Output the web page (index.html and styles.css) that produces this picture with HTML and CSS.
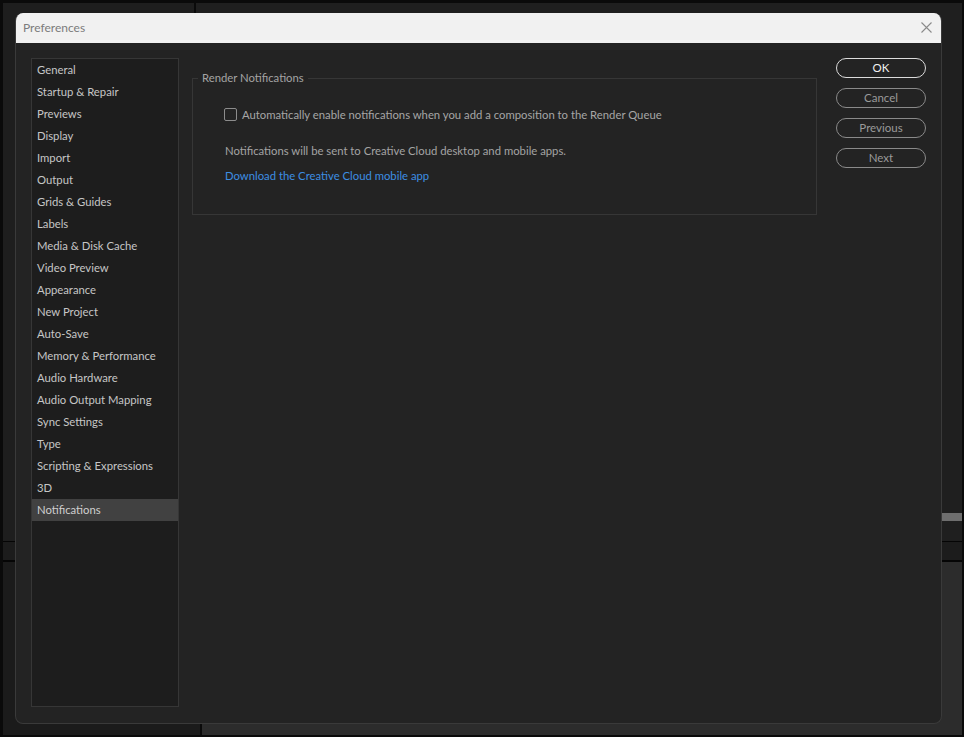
FILE: index.html
```html
<!DOCTYPE html>
<html>
<head>
<meta charset="utf-8">
<title>Preferences</title>
<link rel="stylesheet" href="styles.css">
</head>
<body>
<div class="app">
  <div class="app-top">
    <div class="pane pane-left"></div>
    <div class="pane pane-right">
      <div class="thumb-track"><div class="thumb"></div></div>
    </div>
  </div>
  <div class="app-mid"></div>
  <div class="app-bottom">
    <div class="pane bottom-left"></div>
    <div class="pane bottom-right"></div>
  </div>
</div>

<div class="dialog">
  <div class="titlebar">
    <span class="title">Preferences</span>
    <svg class="close" width="11" height="11" viewBox="0 0 11 11"><path d="M0.5 0.5 L10.5 10.5 M10.5 0.5 L0.5 10.5" stroke="#8a8a8a" stroke-width="1.1" fill="none"/></svg>
  </div>
  <div class="dialog-body">
    <ul class="sidebar">
      <li>General</li>
      <li>Startup &amp; Repair</li>
      <li>Previews</li>
      <li>Display</li>
      <li>Import</li>
      <li>Output</li>
      <li>Grids &amp; Guides</li>
      <li>Labels</li>
      <li>Media &amp; Disk Cache</li>
      <li>Video Preview</li>
      <li>Appearance</li>
      <li>New Project</li>
      <li>Auto-Save</li>
      <li>Memory &amp; Performance</li>
      <li>Audio Hardware</li>
      <li>Audio Output Mapping</li>
      <li>Sync Settings</li>
      <li>Type</li>
      <li>Scripting &amp; Expressions</li>
      <li>3D</li>
      <li class="selected">Notifications</li>
    </ul>
    <div class="content">
      <fieldset class="group">
        <legend>Render Notifications</legend>
        <div class="group-body">
          <label class="check-row"><span class="checkbox"></span><span>Automatically enable notifications when you add a composition to the Render Queue</span></label>
          <p class="note">Notifications will be sent to Creative Cloud desktop and mobile apps.</p>
          <a class="link">Download the Creative Cloud mobile app</a>
        </div>
      </fieldset>
    </div>
    <div class="buttons">
      <button class="btn btn-primary">OK</button>
      <button class="btn">Cancel</button>
      <button class="btn">Previous</button>
      <button class="btn">Next</button>
    </div>
  </div>
</div>
</body>
</html>
```

FILE: styles.css
```css
* { box-sizing: border-box; }
html, body { margin: 0; padding: 0; }
body {
  width: 964px;
  height: 737px;
  overflow: hidden;
  background: #0a0a0a;
  font-family: "Lato", "Noto Sans", sans-serif;
  font-size: 11.3px;
  position: relative;
}

/* background application */
.app {
  width: 964px;
  height: 737px;
  padding: 3px 2px 2px 3px;
  display: flex;
  flex-direction: column;
}
.app-top {
  height: 538px;
  display: flex;
  gap: 2px;
}
.pane-left { width: 191px; background: #1e1e1e; }
.pane-right { flex: 1; background: #1f1f1f; display: flex; justify-content: flex-end; }
.thumb-track { width: 21px; padding-top: 510px; }
.thumb { height: 8px; background: #6e6e6e; }
.app-mid {
  height: 21px;
  border-top: 1px solid #050505;
  border-bottom: 2px solid #050505;
  background: #1c1c1c;
}
.app-bottom {
  flex: 1;
  display: flex;
  gap: 2px;
}
.bottom-left { width: 197px; background: #1b1b1b; }
.bottom-right { flex: 1; background: #2c2c2c; }

/* dialog */
.dialog {
  position: absolute;
  left: 15px;
  top: 13px;
  width: 927px;
  height: 711px;
  background: #232323;
  border: 1px solid #3a3a3a;
  border-top: none;
  border-radius: 8px;
  display: flex;
  flex-direction: column;
  overflow: hidden;
}
.titlebar {
  height: 30px;
  background: #f1f1f1;
  display: flex;
  align-items: center;
  justify-content: space-between;
  padding: 0 9px 0 7px;
  flex-shrink: 0;
}
.title {
  color: #7c7c7c;
  font-size: 12px;
  margin-top: -2px;
}
.close { display: block; margin-top: -2px; }

.dialog-body {
  flex: 1;
  display: flex;
  padding: 15px 15px 15px 15px;
  min-height: 0;
}

.sidebar {
  list-style: none;
  margin: 0;
  padding: 0;
  width: 148px;
  height: 649px;
  background: #1d1d1d;
  border: 1px solid #363636;
  flex-shrink: 0;
}
.sidebar li {
  height: 22px;
  line-height: 22px;
  padding-left: 5px;
  color: #c6c6c6;
  font-size: 11.3px;
  white-space: nowrap;
}
.sidebar li.selected {
  background: #414141;
  color: #cfcfcf;
}

.content {
  width: 625px;
  margin-left: 13px;
  padding-top: 13px;
  flex-shrink: 0;
}
.group {
  margin: 0;
  padding: 0;
  border: 1px solid #363636;
  min-width: 0;
}
.group legend {
  margin-left: 5px;
  padding: 0 4px;
  line-height: 14px;
  color: #a3a3a3;
  font-size: 11.3px;
}
.group-body {
  padding: 22px 0 30px 31px;
}
.check-row {
  display: flex;
  align-items: center;
  gap: 5px;
  height: 14px;
  color: #a6a6a6;
  font-size: 11.3px;
  white-space: nowrap;
}
.checkbox {
  width: 13px;
  height: 13px;
  border: 1.5px solid #8c8c8c;
  border-radius: 2px;
  flex-shrink: 0;
}
.note {
  margin: 22px 0 0 1px;
  line-height: 16px;
  color: #a3a3a3;
  font-size: 11.3px;
}
.link {
  display: block;
  margin: 9px 0 0 1px;
  line-height: 16px;
  color: #3d8ee2;
  font-size: 11.3px;
}

.buttons {
  margin-left: 19px;
  width: 90px;
  display: flex;
  flex-direction: column;
  gap: 10px;
}
.btn {
  height: 20px;
  width: 90px;
  border-radius: 10px;
  border: 1.5px solid #8a8a8a;
  background: transparent;
  color: #9a9a9a;
  font-family: "Lato", "Noto Sans", sans-serif;
  font-size: 11.5px;
  padding: 0 0 1px 0;
  line-height: 15px;
}
.btn-primary {
  border-color: #dcdcdc;
  color: #f2f2f2;
}
```
